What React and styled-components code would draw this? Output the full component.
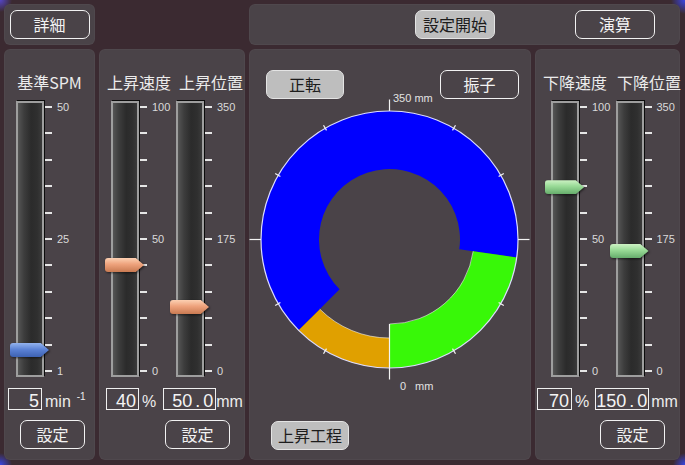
import React from "react";
import styled, { createGlobalStyle } from "styled-components";

const GlobalStyle = createGlobalStyle`
	html, body {
		margin: 0;
		padding: 0;
	}
	body {
		background: #3b2a31;
		font-family: "Noto Sans CJK JP", "Liberation Sans", sans-serif;
		color: #eeeeee;
	}
`;

const Screen = styled.div`
	width: 685px;
	height: 465px;
	box-sizing: border-box;
	padding: 4px 5px 0 4px;
	display: flex;
	flex-direction: column;
	gap: 4px;
	overflow: hidden;
	background: radial-gradient(circle at 0 0, #5546c8 0, rgba(85, 70, 200, 0) 12px),
		radial-gradient(circle at 100% 0, #3a46e6 0, rgba(58, 70, 230, 0) 14px),
		radial-gradient(circle at 0 100%, #3a46e6 0, rgba(58, 70, 230, 0) 12px),
		radial-gradient(circle at 100% 100%, #3a46e6 0, rgba(58, 70, 230, 0) 12px),
		#3b2a31;
`;

const Panel = styled.section`
	background: #4a4348;
	border-radius: 6px;
	box-sizing: border-box;
	box-shadow: inset 0 0 0 1px rgba(255, 255, 255, 0.03);
`;

const TopBar = styled.div`
	display: flex;
	justify-content: space-between;
	height: 41px;
`;

const TopLeft = styled(Panel)`
	width: 91px;
	display: flex;
	align-items: center;
	justify-content: center;
`;

const TopRight = styled(Panel)`
	width: 431px;
	display: flex;
	align-items: center;
	justify-content: flex-end;
	gap: 80px;
	padding-right: 25px;
`;

const MainRow = styled.div`
	display: flex;
	gap: 4px;
	height: 411px;
`;

const SidePanel = styled(Panel)`
	width: ${(p) => p.$w}px;
	display: flex;
	flex-direction: column;
	padding-top: 23px;
`;

const CenterPanel = styled(Panel)`
	width: 282px;
	display: flex;
	flex-direction: column;
	padding-top: 21px;
`;

const Button = styled.button`
	width: ${(p) => p.$w || 80}px;
	height: 29px;
	box-sizing: border-box;
	padding: 0;
	border: 1px solid ${(p) => (p.$filled ? "#e4e4e4" : "#f2f2f2")};
	border-radius: 7px;
	background: ${(p) => (p.$filled ? "#bebebe" : "transparent")};
	color: ${(p) => (p.$filled ? "#1c1c1c" : "#f2f2f2")};
	font-family: "Noto Sans CJK JP", sans-serif;
	font-size: 16px;
	line-height: 27px;
	text-align: center;
`;

const LabelRow = styled.div`
	display: flex;
	justify-content: ${(p) => (p.$center ? "center" : "flex-start")};
	gap: ${(p) => p.$gap || 0}px;
	padding-left: ${(p) => p.$pl || 0}px;
`;

const Label = styled.div`
	font-size: 16px;
	line-height: 20px;
	color: #ececec;
	white-space: nowrap;
`;

const SliderRow = styled.div`
	display: flex;
	margin-top: 9px;
	padding-left: ${(p) => p.$pl}px;
`;

const SliderBox = styled.div`
	position: relative;
	display: flex;
	width: ${(p) => (p.$w ? `${p.$w}px` : "auto")};
`;

const Track = styled.div`
	width: 28px;
	height: 276px;
	box-sizing: border-box;
	border: 2px solid #9e9e9e;
	background: linear-gradient(
		to right,
		#555555 0,
		#3d3d3d 25%,
		#2b2b2b 55%,
		#2f2f2f 80%,
		#3a3a3a 100%
	);
	box-shadow: 1px -1px 0 #0c0c0c;
`;

const Scale = styled.div`
	display: flex;
	flex-direction: column;
	justify-content: space-between;
	height: 276px;
	margin-left: 1px;
`;

const Tick = styled.div`
	display: flex;
	align-items: center;
	gap: 5px;
	height: 12px;
`;

const TickLine = styled.i`
	width: 7px;
	height: 2px;
	background: #e6e6e6;
`;

const TickLabel = styled.span`
	font-family: "Liberation Sans", sans-serif;
	font-size: 11px;
	line-height: 12px;
	color: #dadada;
`;

const ThumbWrap = styled.div`
	position: absolute;
	left: -6px;
	width: 39px;
	height: 14px;
	margin-top: -7px;
	filter: drop-shadow(1px 1px 1px rgba(0, 0, 0, 0.55));
`;

const tones = {
	blue: "linear-gradient(#93b3ee, #5c83d6 45%, #3d61b2)",
	orange: "linear-gradient(#fcd0b2, #eea27c 45%, #c97a52)",
	green: "linear-gradient(#cdf2c4, #98da96 45%, #66ad6c)",
};

const ThumbShape = styled.div`
	width: 100%;
	height: 100%;
	border-radius: 3px 0 0 3px;
	background: ${(p) => tones[p.$tone]};
	clip-path: polygon(0 0, 79% 0, 100% 50%, 79% 100%, 0 100%);
`;

const ValueRow = styled.div`
	display: flex;
	align-items: flex-end;
	height: 22px;
	margin-top: 11px;
	padding-left: ${(p) => p.$pl}px;
`;

const NumBox = styled.div`
	width: ${(p) => p.$w}px;
	height: 22px;
	box-sizing: border-box;
	margin-left: ${(p) => p.$ml || 0}px;
	border: 1px solid #f0f0f0;
	padding-right: 2px;
	text-align: right;
	font-family: "Liberation Sans", sans-serif;
	font-size: 18px;
	line-height: 24px;
	color: #f4f4f4;
	white-space: nowrap;
`;

const Dot = styled.span`
	padding: 0 3px;
`;

const Unit = styled.span`
	margin-left: ${(p) => p.$ml || 0}px;
	font-family: "Liberation Sans", sans-serif;
	font-size: 16px;
	line-height: 16px;
	color: #ececec;
`;

const Sup = styled.span`
	align-self: flex-start;
	margin: 4px 0 0 6px;
	font-family: "Liberation Sans", sans-serif;
	font-size: 10px;
	line-height: 10px;
	color: #ececec;
`;

const ActionRow = styled.div`
	display: flex;
	justify-content: ${(p) => (p.$end ? "flex-end" : "flex-start")};
	margin-top: 10px;
	padding: 0 ${(p) => p.$pr || 0}px 0 ${(p) => p.$pl || 0}px;
`;

const ModeRow = styled.div`
	display: flex;
	justify-content: space-between;
	padding: 0 12px 0 17px;
`;

const Dial = styled.svg`
	display: block;
	margin-top: -10px;
`;

const StageRow = styled.div`
	display: flex;
	margin-top: 26px;
	padding-left: 22px;
`;

const Num = ({ value, w, ml }) => {
	const [a, b] = value.split(".");
	return (
		<NumBox $w={w} $ml={ml}>
			{a}
			{b !== undefined && (
				<>
					<Dot>.</Dot>
					{b}
				</>
			)}
		</NumBox>
	);
};

const Slider = ({ labels, pos, tone, w }) => (
	<SliderBox $w={w}>
		<Track />
		<Scale>
			{Array.from({ length: 11 }, (_, i) => (
				<Tick key={i}>
					<TickLine />
					{i % 5 === 0 && <TickLabel>{labels[i / 5]}</TickLabel>}
				</Tick>
			))}
		</Scale>
		<ThumbWrap style={{ top: 7 + (1 - pos) * 264 }}>
			<ThumbShape $tone={tone} />
		</ThumbWrap>
	</SliderBox>
);

// dial geometry (svg coords, origin at panel left / y 89)
const CX = 140.5;
const CY = 150.5;
const RO = 128.5;

const pt = (r, a) => {
	const t = (a * Math.PI) / 180;
	return [CX + r * Math.cos(t), CY + r * Math.sin(t)];
};

const sector = (a0, a1, ri, ro) => {
	const [x0, y0] = pt(ro, a0);
	const [x1, y1] = pt(ro, a1);
	const [x2, y2] = pt(ri, a1);
	const [x3, y3] = pt(ri, a0);
	const large = a1 - a0 > 180 ? 1 : 0;
	return `M${x0} ${y0} A${ro} ${ro} 0 ${large} 1 ${x1} ${y1} L${x2} ${y2} A${ri} ${ri} 0 ${large} 0 ${x3} ${y3} Z`;
};

const arc = (a0, a1, r) => {
	const [x0, y0] = pt(r, a0);
	const [x1, y1] = pt(r, a1);
	return `M${x0} ${y0} A${r} ${r} 0 0 1 ${x1} ${y1}`;
};

const segments = [
	{ from: 135, to: 368, inner: 70.5, color: "#0000ff" },
	{ from: 8, to: 90, inner: 84.5, color: "#38f808" },
	{ from: 90, to: 135, inner: 98.5, color: "#e0a000" },
];

const StrokeDial = () => (
	<Dial width="282" height="306" viewBox="0 0 282 306">
		{segments.map((s) => (
			<path key={s.from} d={sector(s.from, s.to, s.inner, RO)} fill={s.color} />
		))}
		<path d={arc(8, 90, 84.5)} stroke="rgba(255,255,255,0.55)" fill="none" />
		<path d={arc(90, 135, 98.5)} stroke="rgba(255,255,255,0.55)" fill="none" />
		<circle cx={CX} cy={CY} r={RO} fill="none" stroke="#dcdcff" strokeWidth="1.2" />
		{Array.from({ length: 12 }, (_, i) => {
			const a = i * 30;
			const major = a % 90 === 0;
			const r0 = a === 90 ? 84.5 : major ? RO : 126;
			const r1 = major ? RO + 11.5 : 132;
			const [x0, y0] = pt(r0, a);
			const [x1, y1] = pt(r1, a);
			return <line key={a} x1={x0} y1={y0} x2={x1} y2={y1} stroke="#f4f4f4" strokeWidth="1.2" />;
		})}
		<text x="144" y="13" fill="#e2e2e2" fontFamily="Liberation Sans, sans-serif" fontSize="11">
			350 mm
		</text>
		<text x="151" y="301" fill="#e2e2e2" fontFamily="Liberation Sans, sans-serif" fontSize="11">
			0
		</text>
		<text x="166" y="301" fill="#e2e2e2" fontFamily="Liberation Sans, sans-serif" fontSize="11">
			mm
		</text>
	</Dial>
);

export default function App() {
	return (
		<Screen>
			<GlobalStyle />
			<TopBar>
				<TopLeft>
					<Button>詳細</Button>
				</TopLeft>
				<TopRight>
					<Button $filled>設定開始</Button>
					<Button>演算</Button>
				</TopRight>
			</TopBar>
			<MainRow>
				<SidePanel $w={91}>
					<LabelRow $center>
						<Label>基準SPM</Label>
					</LabelRow>
					<SliderRow $pl={12}>
						<Slider labels={["50", "25", "1"]} pos={0.083} tone="blue" />
					</SliderRow>
					<ValueRow $pl={4}>
						<Num value="5" w={34} />
						<Unit $ml={3}>min</Unit>
						<Sup>-1</Sup>
					</ValueRow>
					<ActionRow $pl={16}>
						<Button $w={65}>設定</Button>
					</ActionRow>
				</SidePanel>

				<SidePanel $w={146}>
					<LabelRow $pl={8} $gap={8}>
						<Label>上昇速度</Label>
						<Label>上昇位置</Label>
					</LabelRow>
					<SliderRow $pl={12}>
						<Slider w={65} labels={["100", "50", "0"]} pos={0.405} tone="orange" />
						<Slider w={65} labels={["350", "175", "0"]} pos={0.246} tone="orange" />
					</SliderRow>
					<ValueRow $pl={7}>
						<Num value="40" w={33} />
						<Unit $ml={3}>%</Unit>
						<Num value="50.0" w={53} ml={7} />
						<Unit>mm</Unit>
					</ValueRow>
					<ActionRow $end $pr={15}>
						<Button $w={65}>設定</Button>
					</ActionRow>
				</SidePanel>

				<CenterPanel>
					<ModeRow>
						<Button $filled $w={78}>
							正転
						</Button>
						<Button $w={79}>振子</Button>
					</ModeRow>
					<StrokeDial />
					<StageRow>
						<Button $filled $w={78}>
							上昇工程
						</Button>
					</StageRow>
				</CenterPanel>

				<SidePanel $w={145}>
					<LabelRow $pl={8} $gap={10}>
						<Label>下降速度</Label>
						<Label>下降位置</Label>
					</LabelRow>
					<SliderRow $pl={16}>
						<Slider w={65} labels={["100", "50", "0"]} pos={0.7} tone="green" />
						<Slider w={65} labels={["350", "175", "0"]} pos={0.458} tone="green" />
					</SliderRow>
					<ValueRow $pl={2}>
						<Num value="70" w={35} />
						<Unit $ml={3}>%</Unit>
						<Num value="150.0" w={54} ml={6} />
						<Unit $ml={2}>mm</Unit>
					</ValueRow>
					<ActionRow $end $pr={15}>
						<Button $w={65}>設定</Button>
					</ActionRow>
				</SidePanel>
			</MainRow>
		</Screen>
	);
}
